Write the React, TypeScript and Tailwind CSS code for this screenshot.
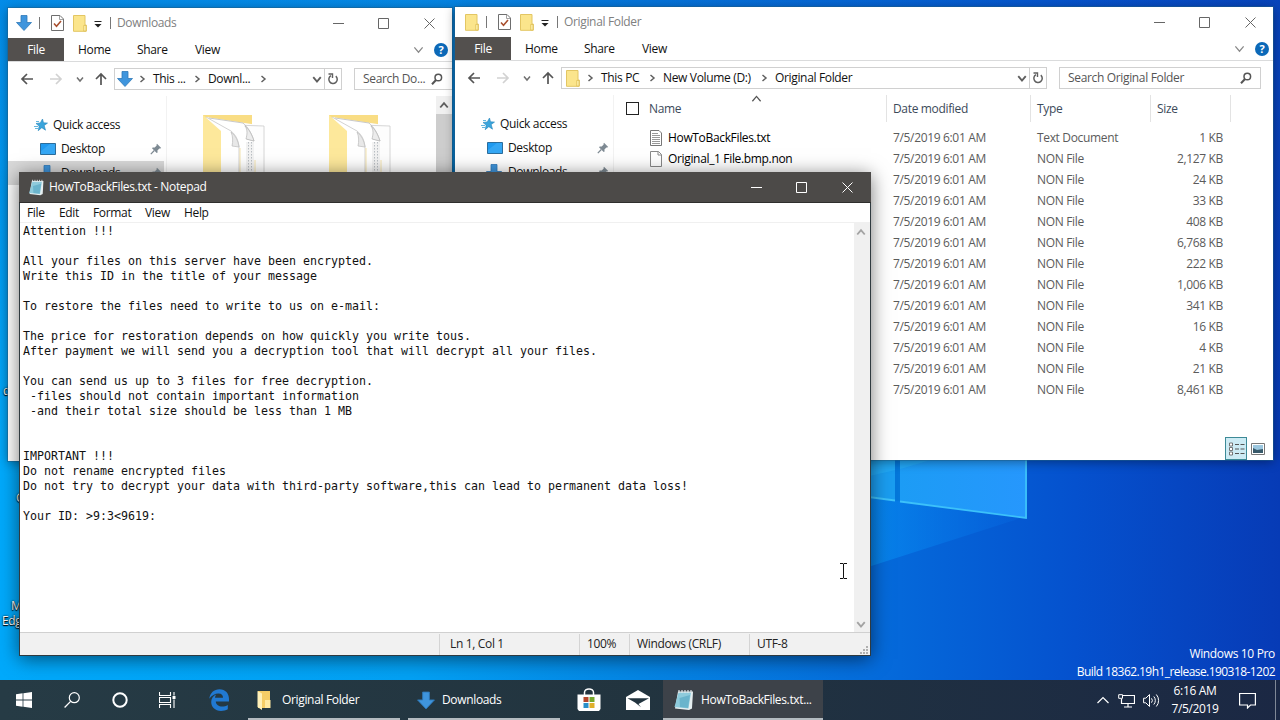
import type { ReactNode } from 'react';

type FileRow = { name?: string; type: string; size: string };

const files: FileRow[] = [
  { name: 'HowToBackFiles.txt', type: 'Text Document', size: '1 KB' },
  { name: 'Original_1 File.bmp.non', type: 'NON File', size: '2,127 KB' },
  { type: 'NON File', size: '24 KB' },
  { type: 'NON File', size: '33 KB' },
  { type: 'NON File', size: '408 KB' },
  { type: 'NON File', size: '6,768 KB' },
  { type: 'NON File', size: '222 KB' },
  { type: 'NON File', size: '1,006 KB' },
  { type: 'NON File', size: '341 KB' },
  { type: 'NON File', size: '16 KB' },
  { type: 'NON File', size: '4 KB' },
  { type: 'NON File', size: '21 KB' },
  { type: 'NON File', size: '8,461 KB' },
];

const note = `Attention !!!

All your files on this server have been encrypted.
Write this ID in the title of your message

To restore the files need to write to us on e-mail:

The price for restoration depends on how quickly you write tous.
After payment we will send you a decryption tool that will decrypt all your files.

You can send us up to 3 files for free decryption.
 -files should not contain important information
 -and their total size should be less than 1 MB


IMPORTANT !!!
Do not rename encrypted files
Do not try to decrypt your data with third-party software,this can lead to permanent data loss!

Your ID: >9:3<9619:`;

/* ---------- icons ---------- */

function DownArrow({ className = 'w-4 h-4' }: { className?: string }) {
  return (
    <svg viewBox="0 0 16 16" className={className}>
      <path d="M5 .5h6v7h4.5L8 15.5.5 7.5H5z" fill="#3f95dd" stroke="#2f78b8" strokeWidth=".8" />
    </svg>
  );
}

function Folder() {
  return (
    <svg viewBox="0 0 14 17" className="w-3.5 h-[17px] shrink-0">
      <path d="M.5.5h11.500v9.500h1.300v6.300H.5z" fill="#fbe58c" stroke="#e3c663" />
      <path d="M10.700 10.500h2.300v5.500h-2.300z" fill="#fdf0ac" stroke="#dcbb50" strokeWidth=".7" />
    </svg>
  );
}

function CheckedDoc() {
  return (
    <svg viewBox="0 0 13 16" className="w-[13px] h-4 shrink-0">
      <path d="M.5.5h8.500l3.500 3.500v11.500H.5z" fill="#fff" stroke="#6e6e6e" />
      <path d="M8.500.5v4h4" fill="none" stroke="#8b8b8b" strokeWidth=".8" />
      <path d="M3 8.500l2.500 2.700L10 6" fill="none" stroke="#a9502f" strokeWidth="1.600" />
    </svg>
  );
}

function Chevron({ dir, size = 8, stroke = '#5f5f5f', weight = 1.5 }: { dir: 'up' | 'down' | 'right'; size?: number; stroke?: string; weight?: number }) {
  const d = { up: 'M1 6l3-3.500L7 6', down: 'M1 2.500L4 6l3-3.500', right: 'M2.500 1L6 4 2.500 7' }[dir];
  return (
    <svg viewBox="0 0 8 8" width={size} height={size} className="shrink-0">
      <path d={d} fill="none" stroke={stroke} strokeWidth={weight} />
    </svg>
  );
}

function NavArrow({ dir, stroke }: { dir: 'left' | 'right' | 'up'; stroke: string }) {
  const d = { left: 'M13 7H2M7 2L2 7l5 5', right: 'M1 7h11M7 2l5 5-5 5', up: 'M7 13V2M2 7l5-5 5 5' }[dir];
  return (
    <svg viewBox="0 0 14 14" className="w-3.5 h-3.5 shrink-0">
      <path d={d} fill="none" stroke={stroke} strokeWidth="1.700" />
    </svg>
  );
}

function Magnifier() {
  return (
    <svg viewBox="0 0 12 12" className="w-3 h-3 shrink-0">
      <circle cx="7.300" cy="4.500" r="3.300" fill="none" stroke="#555" strokeWidth="1.500" />
      <path d="M5 7L1 11.200" stroke="#555" strokeWidth="2" />
    </svg>
  );
}

function Refresh() {
  return (
    <svg viewBox="0 0 12 12" className="w-3 h-3 shrink-0">
      <path d="M4 2.600a4.200 4.200 0 1 0 4.800.5" fill="none" stroke="#606060" strokeWidth="1.500" />
      <path d="M1.500 1h4v4" fill="none" stroke="#606060" strokeWidth="1.400" />
    </svg>
  );
}

function Star() {
  return (
    <svg viewBox="0 0 14 14" className="w-3.5 h-3.5 shrink-0">
      <path d="M8.500 1l1 3.800 4 .3-3.300 2.400 1.300 4.700-3.700-2.500-3.600 3 1-4.600L2 5.500l4.300-.6z" fill="#3aa5dc" stroke="#2585bb" strokeWidth=".6" />
      <path d="M0 8.500h4M1 10.500h3M2 3.500h3" stroke="#65b7de" />
    </svg>
  );
}

function DesktopIcon() {
  return (
    <svg viewBox="0 0 16 12" className="w-4 h-3 shrink-0">
      <path d="M.5.5h15v11H.5z" fill="#1f9af0" stroke="#2b6d9c" />
      <path d="M1 8l9-7h5v10H1z" fill="#47b2f7" opacity=".55" />
    </svg>
  );
}

function Pin() {
  return (
    <svg viewBox="0 0 12 12" className="w-3 h-3 shrink-0">
      <path d="M7 .8L11.200 5l-1 .6-.8-.2-2 2 .2 2-.9.7L2 5.300l.7-.8 2 .1 2-2-.2-.9z" fill="#7e8a93" />
      <path d="M4.300 7.500L.8 11.200" stroke="#7e8a93" strokeWidth="1.200" />
    </svg>
  );
}

function TextFile() {
  return (
    <svg viewBox="0 0 12 16" className="w-3 h-4 shrink-0">
      <path d="M.5.5H9L11.500 3v12.500H.5z" fill="#fff" stroke="#777" />
      <path d="M2 3.500h6M2 5.500h8M2 7.500h8M2 9.500h8M2 11.500h8M2 13.500h8" stroke="#999" />
    </svg>
  );
}

function BlankFile() {
  return (
    <svg viewBox="0 0 12 16" className="w-3 h-4 shrink-0">
      <path d="M.5.5h8l3 3v12H.5z" fill="#fff" stroke="#888" />
      <path d="M8 .5V4h3.500" fill="none" stroke="#888" />
    </svg>
  );
}

function Help() {
  return (
    <span className="flex w-3.5 h-3.5 items-center justify-center rounded-full bg-[#0c69b8] text-[11px] leading-none font-bold text-white">?</span>
  );
}

function BigFolder() {
  return (
    <svg viewBox="0 0 62 66" className="w-[62px] h-[66px] shrink-0">
      <path d="M0 0h49v66H0z" fill="#f9dd84" />
      <path d="M3 2l58 9v55H14z" fill="#fdfdfd" />
      <path d="M30 10l31 1v55" fill="none" stroke="#cbcbcb" strokeWidth=".8" />
      <path d="M6 3l34 5 11 18v40H22z" fill="#fff" />
      <path d="M6 3l34 5c5 4 9 11 11 18l-7-2" fill="none" stroke="#bcbcbc" strokeWidth=".8" />
      <path d="M42 11c3 4 2 9 1 13l8 2c-2-6-5-12-9-15z" fill="#ececec" stroke="#b5b5b5" strokeWidth=".7" />
      <path d="M43 27h8v39h-8z" fill="#f2f2f2" />
      <path d="M45.500 27v39M48.500 27v39" stroke="#b9bec3" strokeDasharray="1.500 1.500" />
      <path d="M3 2l25 14 8 15v35H18z" fill="#fff" />
      <path d="M3 2l25 14c5 4 7 9 8 15v35" fill="none" stroke="#c6c6c6" strokeWidth=".8" />
      <path d="M28 17c2 4 2 10 1 14l7 1c-1-6-3-11-8-15z" fill="#e8e8e8" stroke="#bababa" strokeWidth=".7" />
      <path d="M0 0l18 16v50H0z" fill="#fde89b" />
      <path d="M37 33v33M52 45v21" stroke="#f4e3ae" />
    </svg>
  );
}

function NotepadIcon({ className }: { className: string }) {
  return (
    <svg viewBox="0 0 22 22" className={className}>
      <path d="M5 2.500h15l-1 17-3 1.500-14-1.500z" fill="#e6eff1" />
      <path d="M5.500 3.500H18L15.500 19.500 1.500 18z" fill="#8ecbdc" />
      <path d="M6.500 9L17 6l-2 13-8-1z" fill="#4da3bf" opacity=".55" />
      <path d="M6 1v3M9 1v3M12 1v3M15 1v3M18 1v3" stroke="#dfe7e9" strokeWidth="1.200" />
    </svg>
  );
}

/* ---------- window pieces ---------- */

function WindowButtons({ light = false }: { light?: boolean }) {
  const stroke = light ? '#fff' : '#666';
  return (
    <div className="ml-auto flex h-full items-center">
      {['M0 5.500h11', 'M.5.5h10v10H.5z', 'M.5.5l10 10M10.500.5l-10 10'].map((d) => (
        <span key={d} className="flex w-[45.5px] justify-center">
          <svg viewBox="0 0 11 11" className="w-[11px] h-[11px]">
            <path d={d} fill="none" stroke={stroke} />
          </svg>
        </span>
      ))}
    </div>
  );
}

function Crumb({ children, className }: { children: ReactNode; className: string }) {
  return (
    <>
      <Chevron dir="right" />
      <span className={`shrink-0 whitespace-nowrap pl-[7px] ${className}`}>{children}</span>
    </>
  );
}

type ExplorerProps = {
  className: string;
  title: string;
  icon: ReactNode;
  crumbs: ReactNode;
  search: string;
  addressClass: string;
  searchClass: string;
  children: ReactNode;
};

function Explorer({ className, title, icon, crumbs, search, addressClass, searchClass, children }: ExplorerProps) {
  return (
    <section className={`absolute flex flex-col overflow-hidden bg-white shadow-[0_0_0_1px_#1d5f8a80,0_2px_10px_#00000066] ${className}`}>
      <header className="flex h-[30px] shrink-0 items-center pl-2 text-[#808080]">
        <span className="flex w-[23px] shrink-0">{icon}</span>
        <i className="mr-[11px] h-3 w-px bg-[#777]" />
        <CheckedDoc />
        <span className="ml-[9px] mr-[7px] flex"><Folder /></span>
        <svg viewBox="0 0 8 8" className="mt-0.5 mr-2 h-2 w-2 shrink-0">
          <path d="M.5 1.500h7" stroke="#222" />
          <path d="M.5 4h7L4 7.500z" fill="#222" />
        </svg>
        <i className="mr-[6px] h-3 w-px bg-[#777]" />
        <span>{title}</span>
        <WindowButtons />
      </header>
      <nav className="flex h-[24px] shrink-0 items-center border-b border-[#dadbdc]">
        <span className="flex h-full w-14 items-center justify-center bg-[#53504e] text-white">File</span>
        <span className="w-[59px] pl-3.5">Home</span>
        <span className="w-[58px] pl-3.5">Share</span>
        <span className="pl-3.5">View</span>
        <span className="ml-auto mr-[10px] flex"><Chevron dir="down" size={11} stroke="#888" weight={0.9} /></span>
        <span className="mr-1"><Help /></span>
      </nav>
      <div className="flex h-[34px] shrink-0 items-center pl-[12px]">
        <NavArrow dir="left" stroke="#555" />
        <span className="ml-[15px] flex"><NavArrow dir="right" stroke="#d2d2d2" /></span>
        <span className="ml-[13px] flex"><Chevron dir="down" size={8} stroke="#707070" /></span>
        <span className="ml-[10px] flex"><NavArrow dir="up" stroke="#555" /></span>
        <div className={`ml-1.5 flex h-[22px] shrink-0 items-center border border-[#d0d0d0] pl-[2px] ${addressClass}`}>
          {crumbs}
          <span className="ml-auto mr-[2px] flex"><Chevron dir="down" size={10} /></span>
          <span className="flex h-full w-[17px] items-center justify-center border-l border-[#d0d0d0]"><Refresh /></span>
        </div>
        <div className={`ml-3 flex h-[22px] shrink-0 items-center justify-between border border-[#d0d0d0] pl-2 text-[#555] ${searchClass}`}>
          <span className="whitespace-nowrap">{search}</span>
          <Magnifier />
        </div>
      </div>
      <div className="flex min-h-0 flex-1">{children}</div>
    </section>
  );
}

function Sidebar({ selected = false }: { selected?: boolean }) {
  return (
    <aside className="flex w-[159px] shrink-0 flex-col border-r border-[#f2f2f2] pt-[17px]">
      <div className="flex h-6 items-center pl-[26px]">
        <Star />
        <span className="pl-[5px]">Quick access</span>
      </div>
      <div className="flex h-6 items-center pl-8 pr-1">
        <DesktopIcon />
        <span className="pl-[5px]">Desktop</span>
        <span className="ml-auto"><Pin /></span>
      </div>
      <div className={`mr-0.5 flex h-6 items-center pl-[31px] pr-0.5 ${selected ? 'bg-[#d9d9d9]' : ''}`}>
        <DownArrow />
        <span className="pl-[6px]">Downloads</span>
        <span className="ml-auto"><Pin /></span>
      </div>
    </aside>
  );
}

function FileList() {
  return (
    <div className="flex min-w-0 flex-1 flex-col">
      <div className="flex h-[27px] shrink-0 items-center text-[#3c4a5a]">
        <i className="ml-3 h-[13px] w-[13px] border border-[#222]" />
        <span className="ml-2.5 flex w-[237px] items-center">
          <span className="w-8">Name</span>
          <span className="mb-[20px] ml-[70px] flex"><Chevron dir="up" size={11} stroke="#555" weight={0.9} /></span>
        </span>
        <span className="flex h-full w-36 items-center border-l border-[#e3e3e3] pl-1.5">Date modified</span>
        <span className="flex h-full w-[120px] items-center border-l border-[#e3e3e3] pl-1.5">Type</span>
        <span className="flex h-full w-[81px] items-center border-x border-[#e3e3e3] pl-1.5">Size</span>
      </div>
      <div className="pt-[5px]">
        {files.map((file, i) => (
          <div key={i} className="flex h-[21px] items-center text-[#5b5b5b]">
            <span className="flex w-[279px] shrink-0 items-center pl-9 text-black">
              {i === 0 ? <TextFile /> : <BlankFile />}
              <span className="pl-1.5">{file.name}</span>
            </span>
            <span className="w-36 shrink-0">7/5/2019 6:01 AM</span>
            <span className="w-[120px] shrink-0">{file.type}</span>
            <span className="w-[66px] shrink-0 text-right">{file.size}</span>
          </div>
        ))}
      </div>
      <div className="mt-auto mr-2 flex items-center justify-end gap-1">
        <span className="flex h-[23px] w-[22px] items-center justify-center border border-[#3d8a97] bg-[#cdebf4]">
          <svg viewBox="0 0 17 14" className="h-3.5 w-[17px]">
            <path d="M1.500 1h3v3h-3zM1.500 5.500h3v3h-3zM1.500 10h3v3h-3z" fill="#fff" stroke="#666" strokeWidth=".9" />
            <path d="M7 2.500h4M12.500 2.500h4M7 7h4M12.500 7h4M7 11.500h4M12.500 11.500h4" stroke="#555" />
          </svg>
        </span>
        <svg viewBox="0 0 14 12" className="h-3 w-3.5">
          <path d="M.5.5h13v11H.5z" fill="#fff" stroke="#777" />
          <path d="M2 2h10v8H2z" fill="#9cc7df" />
          <path d="M2 5l4 2 6-1v4H2z" fill="#37596a" />
        </svg>
      </div>
    </div>
  );
}

function Notepad() {
  return (
    <section className="absolute left-[19px] top-[172px] flex h-[484px] w-[852px] flex-col border border-[#2f3a40] bg-white shadow-[0_3px_18px_#00000088]">
      <header className="-mx-px -mt-px flex h-[31px] shrink-0 items-center border-b border-[#2f2e2d] bg-[#4c4a48] pl-[9px] pr-px text-white">
        <NotepadIcon className="w-[17px] h-[17px]" />
        <span className="pl-1">HowToBackFiles.txt - Notepad</span>
        <WindowButtons light />
      </header>
      <nav className="flex h-[20px] shrink-0 items-center border-b border-[#f0f0f0] pl-[7px]">
        <span className="w-8">File</span>
        <span className="w-[34px]">Edit</span>
        <span className="w-[52px]">Format</span>
        <span className="w-[39px]">View</span>
        <span>Help</span>
      </nav>
      <div className="flex min-h-0 flex-1">
        <pre className="flex-1 pl-[3px] pt-px font-['DejaVu_Sans_Mono',monospace] text-[11.63px] leading-[15px] tracking-normal text-[#111]">{note}</pre>
        <div className="flex w-4 flex-col items-center justify-between bg-[#f0f0f0] pb-[3px] pr-0.5 pt-1">
          <Chevron dir="up" size={10} stroke="#a3a3a3" />
          <Chevron dir="down" size={10} stroke="#a3a3a3" />
        </div>
      </div>
      <footer className="flex h-[23px] shrink-0 items-center border-t border-[#d0d0d0] bg-[#f1f1f1] text-[#222]">
        <span className="ml-[419px] flex h-[21px] w-[140px] items-center border-l border-[#d4d4d4] pl-[10px]">Ln 1, Col 1</span>
        <span className="flex h-[21px] w-[50px] items-center border-l border-[#d4d4d4] pl-[7px]">100%</span>
        <span className="flex h-[21px] w-[120px] items-center border-l border-[#d4d4d4] pl-[7px]">Windows (CRLF)</span>
        <span className="flex h-[21px] items-center border-l border-[#d4d4d4] pl-[7px]">UTF-8</span>
        <svg viewBox="0 0 8 8" className="ml-auto mr-0.5 mt-3 h-2 w-2">
          <path d="M6 0h2v2H6zM3 3h2v2H3zM6 3h2v2H6zM0 6h2v2H0zM3 6h2v2H3zM6 6h2v2H6z" fill="#b0b0b0" />
        </svg>
      </footer>
    </section>
  );
}

/* ---------- desktop ---------- */

function Wallpaper() {
  return (
    <svg viewBox="0 0 1280 720" className="absolute inset-0 h-[720px] w-[1280px]">
      <defs>
        <linearGradient id="base" x1="0" x2="1" y1="0" y2="0">
          <stop offset="0" stopColor="#00a9fb" />
          <stop offset=".32" stopColor="#03a1f4" />
          <stop offset=".5" stopColor="#0485e4" />
          <stop offset=".68" stopColor="#056cdc" />
          <stop offset=".84" stopColor="#0551ce" />
          <stop offset="1" stopColor="#073bb6" />
        </linearGradient>
        <linearGradient id="top" x1="0" x2="0" y1="0" y2="1">
          <stop offset="0" stopColor="#0a55c4" stopOpacity=".35" />
          <stop offset=".6" stopColor="#0a55c4" stopOpacity="0" />
        </linearGradient>
        <linearGradient id="pane" x1="0" x2="1" y1="0" y2="0">
          <stop offset="0" stopColor="#1c9cf5" />
          <stop offset="1" stopColor="#2697fd" />
        </linearGradient>
        <linearGradient id="beam" x1="0" x2="1" y1="0" y2="0">
          <stop offset="0" stopColor="#0789ee" stopOpacity=".85" />
          <stop offset="1" stopColor="#0768e2" stopOpacity=".3" />
        </linearGradient>
      </defs>
      <path d="M0 0h1280v720H0z" fill="url(#base)" />
      <path d="M0 0h1280v720H0z" fill="url(#top)" />
      <path d="M865 456H1027V516L865 568z" fill="url(#beam)" />
      <path d="M865 450h30v50l-30-4z" fill="#1a9df0" />
      <path d="M900 450h127v68l-127-17z" fill="url(#pane)" />
      <path d="M865 450h100l-65 19-35 8z" fill="#27aef6" opacity=".6" />
      <path d="M895 450h5v51l-5-.7z" fill="#0477da" />
      <path d="M1026 450v68L900 501.500M895 500.500l-30-4" fill="none" stroke="#3cc1fa" strokeWidth="1.800" />
    </svg>
  );
}

function TaskButton({ icon, label, className, active = false }: { icon: ReactNode; label: string; className: string; active?: boolean }) {
  return (
    <div className={`flex h-10 shrink-0 items-center whitespace-nowrap border-b-2 border-[#b4bbc0] pt-0.5 ${active ? 'bg-[#3d4249]' : ''} ${className}`}>
      {icon}
      <span>{label}</span>
    </div>
  );
}

function Taskbar() {
  return (
    <footer className="absolute bottom-0 left-0 flex h-10 w-[1280px] items-center bg-linear-to-r from-[#263b45] via-[#22343f] to-[#1b2844] text-white">
      <svg viewBox="0 0 16 16" className="ml-4 h-4 w-4 shrink-0">
        <path d="M0 2.300L6.600 1.300v6.300H0zM7.400 1.200L16 0v7.600H7.400zM0 8.400h6.600v6.300L0 13.700zM7.400 8.400H16V16l-8.600-1.200z" fill="#fff" />
      </svg>
      <svg viewBox="0 0 16 16" className="ml-8 h-4 w-4 shrink-0">
        <circle cx="10.300" cy="5.700" r="5" fill="none" stroke="#fff" strokeWidth="1.200" />
        <path d="M6.600 9.400L.6 15.500" stroke="#fff" strokeWidth="1.300" />
      </svg>
      <svg viewBox="0 0 16 16" className="ml-8 h-4 w-4 shrink-0">
        <circle cx="8" cy="8" r="6.700" fill="none" stroke="#fff" strokeWidth="2" />
      </svg>
      <svg viewBox="0 0 17 16" className="ml-[31px] h-4 w-[17px] shrink-0">
        <path d="M.5 0v3.500h11V0M.5 16v-3.500h11V16M.5 5.500h11v5H.5zM15 0v3.500M15 7.500V16" fill="none" stroke="#fff" strokeWidth="1.100" />
        <path d="M13.500 4h3v3h-3z" fill="#fff" />
      </svg>
      <svg viewBox="0 0 20 22" className="ml-[33px] h-[22px] w-5 shrink-0">
        <path d="M.3 9.800C1 4 5 .3 10.500.3c6 0 9.500 4.400 9.500 9.700v2.600H6.800c.2 3.500 3.200 5 6.200 5 2.200 0 4-.6 5.800-1.600v4.300c-2 1.100-4.200 1.600-6.800 1.600-6 0-9.800-3.800-9.800-8.800 0-3.300 1.800-6.100 5-7.600-.7.900-1.100 2-1.200 3.300h8c0-2.800-1.300-4.400-4.500-4.400C6 4.400 2.500 6.400.3 9.800z" fill="#2179d2" />
      </svg>

      <TaskButton
        className="ml-[19px] w-[152px] pl-[9px]"
        label="Original Folder"
        icon={
          <svg viewBox="0 0 14 20" className="mr-[11px] h-5 w-3.5">
            <path d="M1 1h12v17H1z" fill="#f5cd66" />
            <path d="M8 10h5.500v8H8z" fill="#ffe9a1" />
            <path d="M.5 1L5 3.500V20L.5 17z" fill="#fff0b8" />
          </svg>
        }
      />
      <TaskButton className="ml-2 w-[152px] pl-[9px]" label="Downloads" icon={<DownArrow className="mr-[7px] h-[19px] w-[18px]" />} />

      <svg viewBox="0 0 24 24" className="ml-[17px] h-6 w-6 shrink-0">
        <path d="M7.500 7V4.500a4.500 3.600 0 0 1 9 0V7" fill="none" stroke="#fff" strokeWidth="1.500" />
        <path d="M.5 6.500h23V21l-1.500 2H2L.5 21z" fill="#fff" />
        <path d="M6.500 9h5v5h-5z" fill="#b5472a" />
        <path d="M12.500 9h5v5h-5z" fill="#76a82c" />
        <path d="M6.500 15h5v5h-5z" fill="#2a8fc9" />
        <path d="M12.500 15h5v5h-5z" fill="#dfb02c" />
      </svg>
      <svg viewBox="0 0 24 20" className="ml-[25px] h-5 w-6 shrink-0">
        <path d="M0 7L12 0l12 7v13H0z" fill="#fff" />
        <path d="M1.500 8.200H23L12.500 14l2.500 3.200-6-4.700z" fill="#22343f" />
      </svg>
      <TaskButton active className="ml-[13px] w-40 pl-2.5" label="HowToBackFiles.txt..." icon={<NotepadIcon className="mr-[6px] h-[22px] w-[22px]" />} />

      <div className="ml-auto flex items-center">
        <svg viewBox="0 0 12 8" className="mr-[9px] h-2 w-3">
          <path d="M.5 7L6 1.500 11.500 7" fill="none" stroke="#fff" strokeWidth="1.200" />
        </svg>
        <svg viewBox="0 0 17 15" className="mr-2 h-[15px] w-[17px]">
          <path d="M5 2.500h11.500v8H3.500V6M10 10.500v3M6 14h8" fill="none" stroke="#fff" strokeWidth="1.200" />
          <path d="M.7 1.700h3.800v3.600H.7z" fill="none" stroke="#fff" />
        </svg>
        <svg viewBox="0 0 17 15" className="h-[15px] w-[17px]">
          <path d="M.6 5.200h2.200L6.500 1.500v12L2.800 9.800H.6z" fill="none" stroke="#fff" />
          <path d="M8.500 5.300a3.500 3.500 0 0 1 0 4.400M10.800 3.500a6 6 0 0 1 0 8M13.300 1.500a9 9 0 0 1 0 12" fill="none" stroke="#fff" />
        </svg>
        <div className="ml-[10px] w-[50px] whitespace-nowrap text-center leading-[18px]">
          <div>6:16 AM</div>
          <div>7/5/2019</div>
        </div>
        <svg viewBox="0 0 17 17" className="ml-[19px] mr-[19px] h-[17px] w-[17px]">
          <path d="M.6 1.500h15.800V13h-4.900l-3 3v-3H.6z" fill="none" stroke="#fff" strokeWidth="1.200" />
        </svg>
        <i className="mr-1 h-10 w-px bg-[#7f8896]" />
      </div>
    </footer>
  );
}

export default function App() {
  return (
    <main className="relative h-[720px] w-[1280px] overflow-hidden font-['Open_Sans',sans-serif] text-[12px] leading-4 tracking-[-0.34px] text-[#111]">
      <Wallpaper />

      <span className="absolute left-[3px] top-[383px] text-white [text-shadow:0_1px_1px_#000,0_0_2px_#000]">d</span>
      <span className="absolute left-4 top-[490px] text-white [text-shadow:0_1px_1px_#000,0_0_2px_#000]">G</span>
      <div className="absolute left-0 top-[598px] pl-0.5 leading-[15px] text-white [text-shadow:0_1px_1px_#000,0_0_2px_#000]">
        <div className="pl-[9px]">M</div>
        <div>Edge</div>
      </div>
      <div className="absolute right-[5px] top-[645px] text-right leading-[18px] text-white">
        <div>Windows 10 Pro</div>
        <div className="tracking-[-0.56px]">Build 18362.19h1_release.190318-1202</div>
      </div>

      <Explorer
        className="left-2 top-2 h-[453px] w-[444px]"
        title="Downloads"
        icon={<DownArrow />}
        search="Search Do..."
        addressClass="w-[228px]"
        searchClass="w-[102px] pr-3"
        crumbs={
          <>
            <span className="mr-[5px] flex"><DownArrow /></span>
            <Crumb className="w-[47px]">This ...</Crumb>
            <Crumb className="w-[58px]">Downl...</Crumb>
            <Chevron dir="right" />
          </>
        }
      >
        <Sidebar selected />
        <div className="flex flex-1 gap-16 pl-9 pt-[19px]">
          <BigFolder />
          <BigFolder />
        </div>
        <div className="flex w-4 flex-col items-center bg-[#cdcdcd]">
          <span className="flex h-[18px] w-full items-center justify-center bg-[#f0f0f0]"><Chevron dir="up" size={10} /></span>
        </div>
      </Explorer>

      <Explorer
        className="left-[455px] top-[7px] h-[453px] w-[818px]"
        title="Original Folder"
        icon={<span className="ml-0.5"><Folder /></span>}
        search="Search Original Folder"
        addressClass="w-[486px]"
        searchClass="w-[202px] pr-2"
        crumbs={
          <>
            <span className="ml-0.5 mr-[6px] flex"><Folder /></span>
            <Crumb className="w-[54px]">This PC</Crumb>
            <Crumb className="w-[104px]">New Volume (D:)</Crumb>
            <Crumb className="">Original Folder</Crumb>
          </>
        }
      >
        <Sidebar />
        <FileList />
      </Explorer>

      <Notepad />

      {/* text cursor */}
      <svg viewBox="0 0 7 16" className="absolute left-[840px] top-[563px] h-4 w-[7px]">
        <path d="M0 .5h3l.5.5.5-.5h3M3.500 1v14M0 15.500h3l.5-.5.5.5h3" fill="none" stroke="#111" />
      </svg>

      <Taskbar />
    </main>
  );
}
